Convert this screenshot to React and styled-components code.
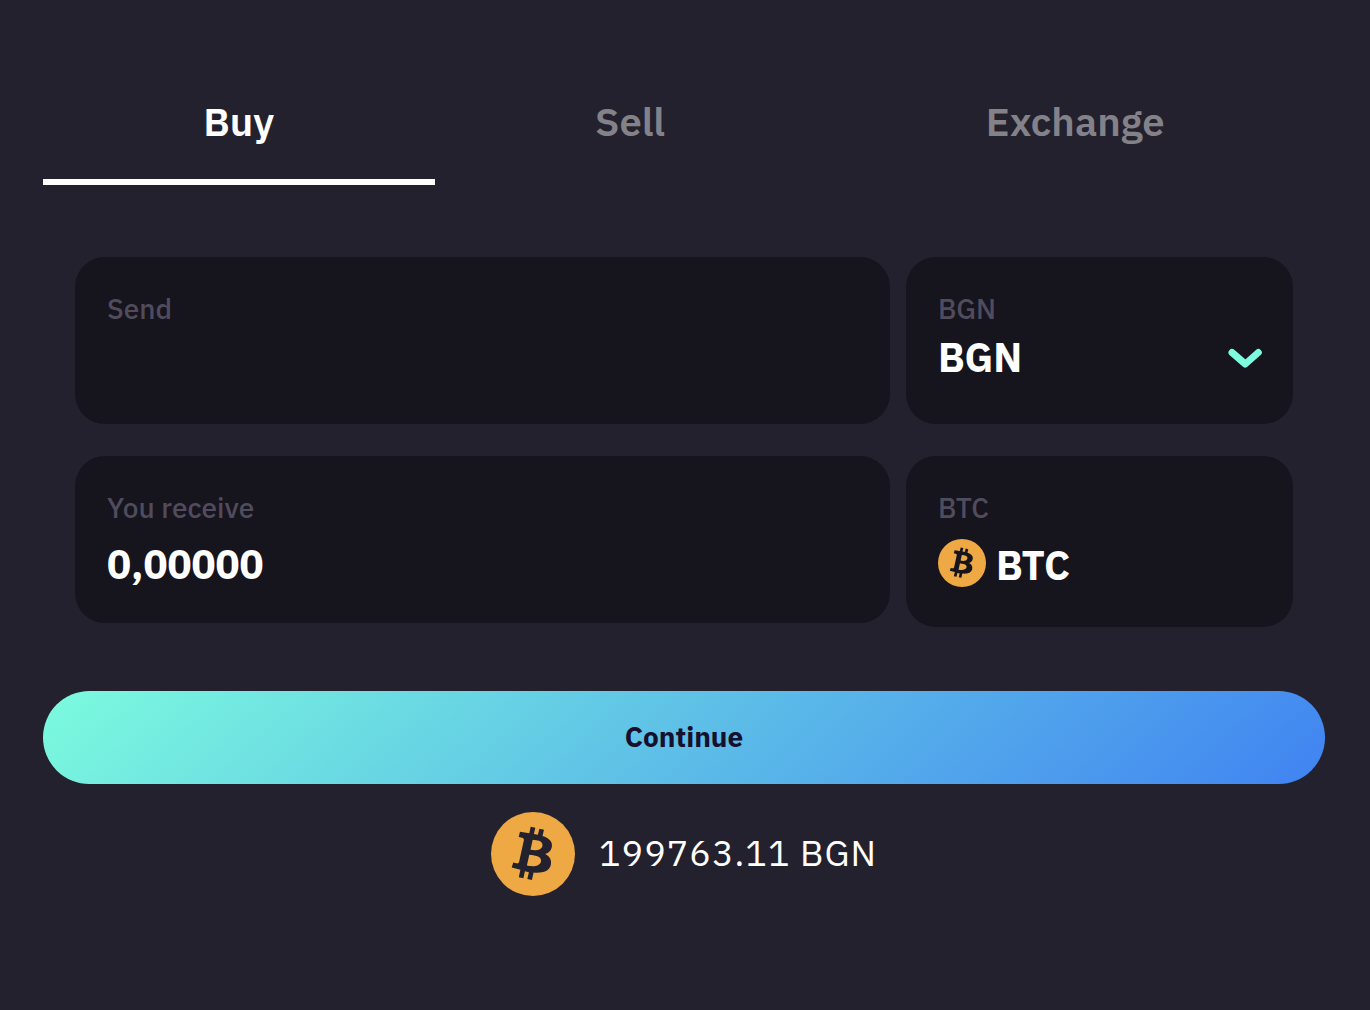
import React, { useState } from "react";
import styled, { createGlobalStyle } from "styled-components";

const TABS = ["Buy", "Sell", "Exchange"];

const BitcoinIcon = ({ size, hole }) => (
  <svg width={size} height={size} viewBox="0 0 84 84" aria-hidden="true">
    <circle cx="42" cy="42" r="42" fill="#eea844" />
    <path
      fill={hole}
      fillRule="evenodd"
      d="M39.7 14.8L44.3 15.8L42.9 21.9L46.9 22.8L48.4 16.8L53 17.8L51.5 24C58 26 61.6 29.6 60.9 34.6C60.3 38.8 57.6 41.2 54.2 42C58.8 44.2 60.9 48 59.8 53C58.2 59.6 51 61.3 42.6 60.5L40.9 68L36.3 67L37.9 60.2L33.9 59.3L32.4 66.2L27.8 65.2L29.4 57.8L20.7 55.4L22.2 50.6L25.3 51.3C27 51.7 27.8 51 28.2 49.5L32.8 28.4C33.1 26.9 32.5 26 31 25.7L27.7 25L29 19.8L38.3 21.2ZM41.7 27.8L39.5 37.8C43.5 38.7 50.3 38.9 51.4 34C52.5 28.9 46 28.2 41.7 27.8ZM38.3 42.8L35.9 53.6C40.3 54.6 48.7 55.3 50 49.6C51.2 44 43 43.3 38.3 42.8Z"
    />
  </svg>
);

const App = () => {
  const [tab, setTab] = useState("Buy");
  const [amount, setAmount] = useState("");

  return (
    <StPage>
      <GlobalStyle />
      <StTabs>
        {TABS.map((name) => (
          <StTab key={name} $active={name === tab} onClick={() => setTab(name)}>
            {name}
          </StTab>
        ))}
      </StTabs>
      <StFields>
        <StCard>
          <StLabel htmlFor="send">Send</StLabel>
          <StInput
            id="send"
            inputMode="decimal"
            value={amount}
            onChange={(e) => setAmount(e.target.value)}
          />
        </StCard>
        <StCard>
          <StLabel htmlFor="currency">BGN</StLabel>
          <StSelectRow>
            <StSelect id="currency" defaultValue="BGN">
              <option>BGN</option>
            </StSelect>
            <StChevron viewBox="0 0 34 22" aria-hidden="true">
              <path d="M5 6.5L18.3 18L31.3 6.5" />
            </StChevron>
          </StSelectRow>
        </StCard>
        <StCard>
          <StLabel htmlFor="receive">You receive</StLabel>
          <StInput id="receive" value="0,00000" readOnly />
        </StCard>
        <StCard>
          <StLabel as="span">BTC</StLabel>
          <StCoin>
            <BitcoinIcon size={48} hole="#16141d" />
            <StCoinName>BTC</StCoinName>
          </StCoin>
        </StCard>
      </StFields>
      <StContinue>Continue</StContinue>
      <StRate>
        <BitcoinIcon size={84} hole="#24212e" />
        <span>199763.11 BGN</span>
      </StRate>
    </StPage>
  );
};

export default App;

const GlobalStyle = createGlobalStyle`
  * {
    box-sizing: border-box;
  }

  body {
    margin: 0;
    background-color: #24212e;
  }

  body, button, input, select {
    font-family: "IBM Plex Sans", "Noto Sans", sans-serif;
  }
`;

const StPage = styled.main`
  padding: 64px 45px 64px 43px;

  display: flex;
  flex-direction: column;

  color: white;
`;

const StTabs = styled.nav`
  display: flex;
`;

const StTab = styled.button`
  flex: 1 1 auto;
  padding: 32px 0;

  border: none;
  border-bottom: 6px solid ${({ $active }) => ($active ? "white" : "transparent")};

  color: ${({ $active }) => ($active ? "white" : "#848289")};
  background: none;
  font-size: 40px;
  font-weight: 600;
  line-height: 51px;
  cursor: pointer;
`;

const StFields = styled.section`
  margin: 72px 32px 64px;

  display: grid;
  grid-template-columns: 40fr 19fr;
  align-items: start;
  gap: 32px 16px;
`;

const StCard = styled.div`
  min-height: 167px;
  padding: 32px;

  border-radius: 30px;

  display: flex;
  flex-direction: column;

  background-color: #16141d;
`;

const StLabel = styled.label`
  color: #504c5d;
  font-size: 28px;
  font-weight: 500;
  line-height: 40px;
`;

const StInput = styled.input`
  width: 100%;
  height: 63px;
  padding: 8px 0 0;

  border: none;
  outline: none;

  color: white;
  background: none;
  font-size: 40px;
  font-weight: 700;
`;

const StSelectRow = styled.div`
  display: flex;
  align-items: center;
`;

const StSelect = styled.select`
  flex: 1;
  min-width: 0;
  padding: 0;

  border: none;
  outline: none;
  appearance: none;

  color: white;
  background: none;
  font-size: 40px;
  font-weight: 700;
  line-height: 56px;
`;

const StChevron = styled.svg`
  width: 34px;
  height: 22px;
  overflow: visible;

  fill: none;
  stroke: #7cfbde;
  stroke-width: 7;
  stroke-linecap: round;
  stroke-linejoin: round;
  pointer-events: none;
`;

const StCoin = styled.div`
  padding: 11px 0 4px;

  display: flex;
  align-items: flex-start;
  gap: 10px;
`;

const StCoinName = styled.span`
  font-size: 40px;
  font-weight: 700;
  line-height: 52px;
`;

const StContinue = styled.button`
  height: 93px;
  padding: 0 0 2px;

  border: none;
  border-radius: 48px;

  color: #16102e;
  background: linear-gradient(137deg, #7cfbde 0%, #6cdde2 25%, #4c9bed 80%, #4083f2 100%);
  font-size: 28px;
  font-weight: 700;
  cursor: pointer;
`;

const StRate = styled.div`
  margin-top: 28px;

  display: flex;
  justify-content: center;
  gap: 24px;

  font-size: 36px;
  line-height: 82px;
  letter-spacing: 1px;
`;
